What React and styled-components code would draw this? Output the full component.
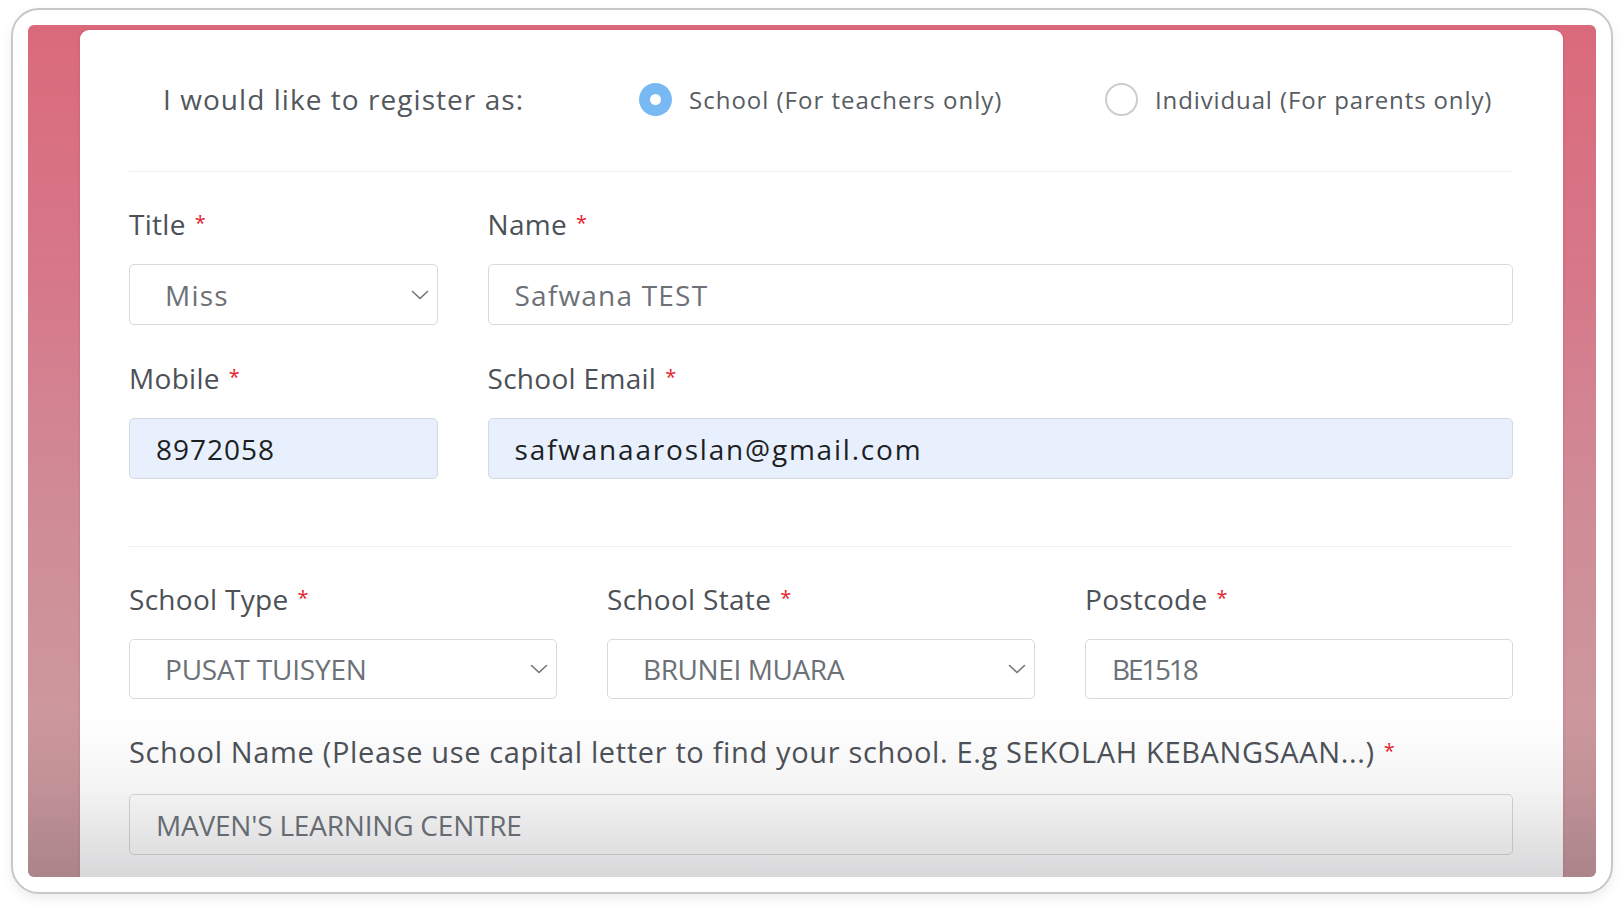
import React from "react";
import styled, { createGlobalStyle } from "styled-components";

const GlobalStyle = createGlobalStyle`
  html, body {
    margin: 0;
    padding: 0;
    background: #ffffff;
  }
  body {
    font-family: "Open Sans", "Noto Sans", sans-serif;
    -webkit-font-smoothing: antialiased;
  }
  * { box-sizing: border-box; }
`;

const Page = styled.div`
  width: 1624px;
  height: 910px;
  padding: 8px 11px 0 11px;
  overflow: hidden;
`;

const Frame = styled.div`
  height: 886px;
  border: 2px solid #c8c8c8;
  border-radius: 28px;
  padding: 15px;
  background: #ffffff;
  box-shadow: 0 5px 12px rgba(0, 0, 0, 0.07);
`;

const Backdrop = styled.div`
  position: relative;
  height: 100%;
  border-radius: 6px;
  overflow: hidden;
  padding: 5px 33px 0 52px;
  background: linear-gradient(
    180deg,
    #da6a7b 0%,
    #d6788a 30%,
    #d08b96 55%,
    #cc979d 80%,
    #c6979b 100%
  );
`;

const Shade = styled.div`
  position: absolute;
  left: 0;
  right: 0;
  bottom: 0;
  height: 160px;
  pointer-events: none;
  background: linear-gradient(
    180deg,
    rgba(60, 60, 70, 0) 0%,
    rgba(60, 60, 70, 0.06) 45%,
    rgba(60, 60, 70, 0.2) 100%
  );
`;

const Card = styled.div`
  background: #ffffff;
  border-radius: 9px 9px 0 0;
  padding: 0 50px 0 49px;
  height: 1000px;
  box-shadow: 0 0 3px rgba(150, 40, 60, 0.25);
`;

const ChoiceRow = styled.div`
  display: grid;
  grid-template-columns: 476px 466px 1fr;
  align-items: center;
  height: 142px;
  padding: 0 0 3px 34px;
  border-bottom: 1px solid #efefef;
`;

const Prompt = styled.div`
  font-size: 28px;
  color: #52575d;
  letter-spacing: 1.05px;
`;

const RadioOption = styled.label`
  display: flex;
  align-items: center;
  gap: 17px;
  font-size: 24px;
  color: #575c62;
  letter-spacing: ${(p) => p.$spacing || 1}px;
  white-space: nowrap;
`;

const RadioDot = styled.span`
  flex: none;
  width: 33px;
  height: 33px;
  border-radius: 50%;
  display: flex;
  align-items: center;
  justify-content: center;
  background: ${(p) => (p.$checked ? "#78b8f3" : "#ffffff")};
  border: ${(p) => (p.$checked ? "none" : "2px solid #cdcdcd")};
  &::after {
    content: "";
    width: 11px;
    height: 11px;
    border-radius: 50%;
    background: #ffffff;
    display: ${(p) => (p.$checked ? "block" : "none")};
  }
`;

const Section = styled.div`
  display: grid;
  grid-template-columns: repeat(12, 1fr);
  column-gap: 50px;
  row-gap: ${(p) => p.$rowGap || 33}px;
  padding-top: 32px;
  padding-bottom: ${(p) => p.$bottom || 0}px;
  border-bottom: ${(p) => (p.$divider ? "1px solid #efefef" : "none")};
`;

const Field = styled.div`
  grid-column: span ${(p) => p.$span};
  display: flex;
  flex-direction: column;
  gap: ${(p) => p.$gap || 16}px;
  min-width: 0;
`;

const Label = styled.div`
  font-size: ${(p) => p.$size || 28}px;
  line-height: 40px;
  color: #4c5157;
  letter-spacing: ${(p) => p.$spacing || 0.3}px;
  white-space: nowrap;
`;

const Required = styled.span`
  color: #e5222c;
  font-size: 20px;
  margin-left: 9px;
  position: relative;
  top: -5px;
`;

const Box = styled.div`
  height: ${(p) => p.$h || 61}px;
  display: flex;
  align-items: center;
  justify-content: space-between;
  padding: 0 8px 0 ${(p) => (p.$select ? 35 : 26)}px;
  border: 1.5px solid ${(p) => (p.$filled ? "#d3d9e0" : "#d9d9d9")};
  border-radius: 5px;
  background: ${(p) => (p.$filled ? "#e8f0fe" : "#ffffff")};
  font-size: 28px;
  letter-spacing: ${(p) => (p.$spacing !== undefined ? p.$spacing : 1.2)}px;
  color: ${(p) => (p.$filled ? "#1d1f23" : "#6c7177")};
  white-space: nowrap;
  overflow: hidden;
`;

const Note = styled.div`
  margin-top: 16px;
  font-size: 22px;
  color: #6c7177;
  white-space: nowrap;
`;

const NoteMark = styled.span`
  color: #e5222c;
  margin-right: 8px;
`;

const Chevron = () => (
  <svg width="18" height="10" viewBox="0 0 18 10" fill="none">
    <path d="M1.5 1.5 L9 8.5 L16.5 1.5" stroke="#6f7479" strokeWidth="1.6" strokeLinecap="round" strokeLinejoin="round" />
  </svg>
);

const Req = () => <Required>*</Required>;

const InputField = ({ span, label, value, select, filled, gap, h, spacing }) => (
  <Field $span={span} $gap={gap}>
    <Label>
      {label}
      <Req />
    </Label>
    <Box $select={select} $filled={filled} $h={h} $spacing={spacing}>
      <span>{value}</span>
      {select && <Chevron />}
    </Box>
  </Field>
);

export default function App() {
  return (
    <>
      <GlobalStyle />
      <Page>
        <Frame>
          <Backdrop>
            <Card>
              <ChoiceRow>
                <Prompt>I would like to register as:</Prompt>
                <RadioOption>
                  <RadioDot $checked />
                  School (For teachers only)
                </RadioOption>
                <RadioOption $spacing={0.88}>
                  <RadioDot />
                  Individual (For parents only)
                </RadioOption>
              </ChoiceRow>

              <Section $divider $bottom={67}>
                <InputField span={3} label="Title" value="Miss" select />
                <InputField span={9} label="Name" value="Safwana TEST" />
                <InputField span={3} label="Mobile" value="8972058" filled spacing={1} />
                <InputField span={9} label="School Email" value="safwanaaroslan@gmail.com" filled spacing={1.8} />
              </Section>

              <Section $rowGap={33}>
                <InputField span={4} label="School Type" value="PUSAT TUISYEN" select gap={16} h={60} spacing={-0.2} />
                <InputField span={4} label="School State" value="BRUNEI MUARA" select gap={16} h={60} spacing={-0.4} />
                <InputField span={4} label="Postcode" value="BE1518" gap={16} h={60} spacing={-2.2} />
                <Field $span={12} $gap={18}>
                  <Label $size={29} $spacing={0.65}>
                    School Name (Please use capital letter to find your school. E.g SEKOLAH KEBANGSAAN...)
                    <Req />
                  </Label>
                  <Box $h={61} $spacing={-0.2}>
                    <span>MAVEN'S LEARNING CENTRE</span>
                  </Box>
                </Field>
              </Section>
              <Note>
                <NoteMark>*</NoteMark>
                If your school is not in the list, please contact our support team.
              </Note>
            </Card>
            <Shade />
          </Backdrop>
        </Frame>
      </Page>
    </>
  );
}
